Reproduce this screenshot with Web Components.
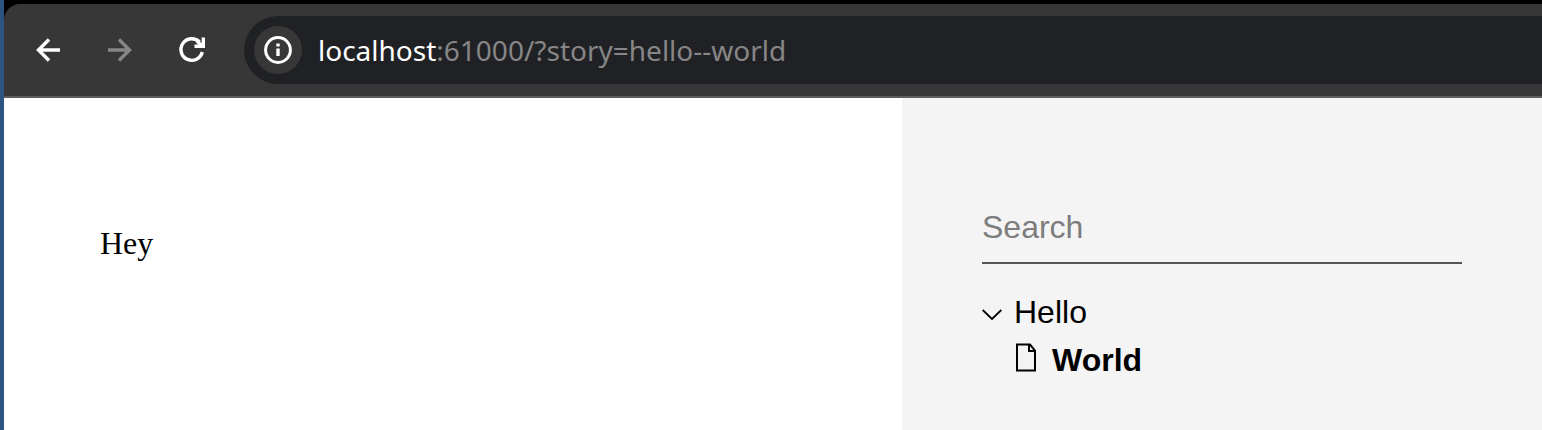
<!DOCTYPE html>
<html lang="en">
<head>
<meta charset="utf-8">
<title>Hello / World</title>
<style>
  html, body {
    height: 100%;
    margin: 0;
  }
  body {
    background: #000;
  }
</style>
</head>
<body>
<browser-window>
  <browser-toolbar slot="toolbar" host="localhost" path=":61000/?story=hello--world"></browser-toolbar>
  <story-view>Hey</story-view>
  <story-sidebar>
    <story-folder label="Hello">
      <story-link href="?story=hello--world">World</story-link>
    </story-folder>
  </story-sidebar>
</browser-window>

<script>
class BrowserWindow extends HTMLElement {
  constructor() {
    super();
    this.attachShadow({ mode: "open" });

    this.shadowRoot.innerHTML = `
      <style>
        :host {
          display: flex;
          flex-direction: column;
          box-sizing: border-box;
          min-height: 100%;
          padding-top: 4px;
          border-left: 4px solid #2b5580;
        }
        .page {
          display: flex;
          flex: 1;
          background: #fff;
        }
      </style>
      <slot name="toolbar"></slot>
      <main class="page"><slot></slot></main>
    `;
  }
}

class BrowserToolbar extends HTMLElement {
  constructor() {
    super();
    this.attachShadow({ mode: "open" });

    this.shadowRoot.innerHTML = `
      <style>
        :host {
          display: flex;
          align-items: center;
          gap: 16px;
          padding: 12px 0 12px 8px;
          border-bottom: 2px solid #5c5c5c;
          border-top-left-radius: 16px;
          background: #373737;
          color: #fff;
        }
        nav {
          display: flex;
        }
        button {
          display: grid;
          place-items: center;
          padding: 0;
          border: none;
          background: none;
          color: inherit;
        }
        nav button {
          width: 72px;
          height: 68px;
        }
        button:disabled {
          color: #868686;
        }
        svg {
          display: block;
          fill: none;
          stroke: currentColor;
          stroke-width: 3.4;
        }
        .address {
          display: flex;
          flex: 1;
          align-items: center;
          gap: 16px;
          height: 68px;
          padding-left: 10px;
          border-radius: 34px 0 0 34px;
          background: #202124;
        }
        .info {
          width: 48px;
          height: 48px;
          border-radius: 50%;
          background: #373737;
        }
        .url {
          flex: 1;
          outline: none;
          font: 28px/40px "Noto Sans", sans-serif;
          color: #868686;
          white-space: nowrap;
        }
        .host {
          color: #fff;
        }
      </style>
      <nav>
        <button aria-label="Back">
          <svg width="32" height="32"><path d="M28 16H6.500M17 5.500L6.500 16L17 26.500"/></svg>
        </button>
        <button aria-label="Forward" disabled>
          <svg width="32" height="32"><path d="M4 16H25.500M15 5.500L25.500 16L15 26.500"/></svg>
        </button>
        <button aria-label="Reload">
          <svg width="32" height="32"><path d="M23.500 8A10.800 10.800 0 1 0 26.300 18M27.300 3.500V12.300H18.500M26 12L21 7"/></svg>
        </button>
      </nav>
      <div class="address">
        <button class="info" aria-label="Site information">
          <svg width="32" height="32"><circle cx="16" cy="16" r="12.400" stroke-width="3"/><path d="M16 14.500V22M16 9.500V12.500" stroke-width="3.400"/></svg>
        </button>
        <div class="url" role="textbox" aria-label="Address" contenteditable="true" spellcheck="false"><span class="host"></span><span class="path"></span></div>
      </div>
    `;

    this.shadowRoot.querySelector(".host").textContent = this.getAttribute("host");
    this.shadowRoot.querySelector(".path").textContent = this.getAttribute("path");
  }
}

class StoryView extends HTMLElement {
  constructor() {
    super();
    this.attachShadow({ mode: "open" });

    this.shadowRoot.innerHTML = `
      <style>
        :host {
          display: block;
          flex: 1;
          padding: 128px 96px 0;
          font: 32px/34px "Liberation Serif", serif;
          color: #000;
        }
      </style>
      <slot></slot>
    `;
  }
}

class StorySidebar extends HTMLElement {
  constructor() {
    super();
    this.attachShadow({ mode: "open" });

    this.shadowRoot.innerHTML = `
      <style>
        :host {
          display: block;
          box-sizing: border-box;
          width: 640px;
          padding: 94px 80px 0;
          background: #f4f4f4;
          font: 32px/48px "Liberation Sans", sans-serif;
          color: #000;
        }
        input {
          display: block;
          box-sizing: border-box;
          width: 100%;
          height: 72px;
          margin-bottom: 24px;
          padding: 0;
          border: none;
          border-bottom: 2px solid #555;
          border-radius: 0;
          outline: none;
          background: none;
          font: inherit;
          color: inherit;
        }
        input::placeholder {
          color: #7d7d7d;
        }
      </style>
      <input type="search" placeholder="Search" aria-label="Search stories">
      <slot></slot>
    `;

    this.shadowRoot.querySelector("input").addEventListener("input", (event) =>
      this.filter(event.target.value.toLowerCase())
    );
  }

  filter(value) {
    this.querySelectorAll("story-link").forEach((link) => {
      link.hidden = !link.textContent.toLowerCase().includes(value);
    });
  }
}

class StoryFolder extends HTMLElement {
  constructor() {
    super();
    this.attachShadow({ mode: "open" });

    this.shadowRoot.innerHTML = `
      <style>
        :host {
          display: block;
        }
        button {
          display: flex;
          align-items: center;
          gap: 12px;
          padding: 0;
          border: none;
          background: none;
          font: inherit;
          color: inherit;
        }
        svg {
          fill: none;
          stroke: currentColor;
          stroke-width: 1.8;
        }
        .stories {
          padding-left: 32px;
        }
      </style>
      <button aria-expanded="true">
        <svg width="20" height="20"><path d="M0.700 8L10 17L19.300 8"/></svg>
        <span></span>
      </button>
      <div class="stories"><slot></slot></div>
    `;

    this.button = this.shadowRoot.querySelector("button");
    this.stories = this.shadowRoot.querySelector(".stories");
    this.shadowRoot.querySelector("span").textContent = this.getAttribute("label");
    this.button.addEventListener("click", () => this.toggle());
  }

  toggle() {
    this.stories.hidden = !this.stories.hidden;
    this.button.setAttribute("aria-expanded", !this.stories.hidden);
  }
}

class StoryLink extends HTMLElement {
  constructor() {
    super();
    this.attachShadow({ mode: "open" });

    this.shadowRoot.innerHTML = `
      <style>
        :host {
          display: block;
        }
        :host([hidden]) {
          display: none;
        }
        a {
          display: flex;
          align-items: center;
          gap: 14px;
          font-weight: bold;
          color: inherit;
          text-decoration: none;
        }
        svg {
          fill: none;
          stroke: currentColor;
          stroke-width: 2;
        }
      </style>
      <a>
        <svg width="24" height="36"><path d="M3 2.500H16L21 8.500V28.500H3ZM15 2.500V9H21"/></svg>
        <span><slot></slot></span>
      </a>
    `;

    this.shadowRoot.querySelector("a").href = this.getAttribute("href");
  }
}

customElements.define("browser-window", BrowserWindow);
customElements.define("browser-toolbar", BrowserToolbar);
customElements.define("story-view", StoryView);
customElements.define("story-sidebar", StorySidebar);
customElements.define("story-folder", StoryFolder);
customElements.define("story-link", StoryLink);
</script>
</body>
</html>
